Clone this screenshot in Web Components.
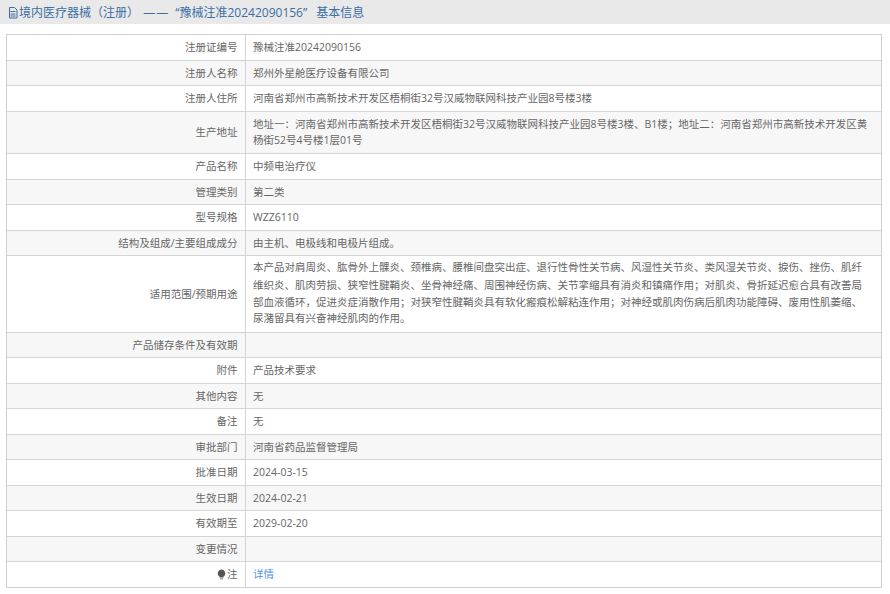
<!DOCTYPE html>
<html lang="zh"><head><meta charset="utf-8">
<style>html,body{margin:0;padding:0;background:#fff;overflow:hidden}body{font-family:"Open Sans","Noto Sans CJK SC",sans-serif;font-size:10.5px;color:#666}div{white-space:nowrap}</style>
</head><body>
<detail-page>
<reg-row label="注册证编号">豫械注准20242090156</reg-row>
<reg-row label="注册人名称" alt>郑州外星舱医疗设备有限公司</reg-row>
<reg-row label="注册人住所">河南省郑州市高新技术开发区梧桐街32号汉威物联网科技产业园8号楼3楼</reg-row>
<reg-row label="生产地址" alt><div>地址一：河南省郑州市高新技术开发区梧桐街32号汉威物联网科技产业园8号楼3楼、B1楼；地址二：河南省郑州市高新技术开发区黄</div><div>杨街52号4号楼1层01号</div></reg-row>
<reg-row label="产品名称">中频电治疗仪</reg-row>
<reg-row label="管理类别" alt>第二类</reg-row>
<reg-row label="型号规格">WZZ6110</reg-row>
<reg-row label="结构及组成/主要组成成分" alt>由主机、电极线和电极片组成。</reg-row>
<reg-row label="适用范围/预期用途"><div>本产品对肩周炎、肱骨外上髁炎、颈椎病、腰椎间盘突出症、退行性骨性关节病、风湿性关节炎、类风湿关节炎、捩伤、挫伤、肌纤</div><div>维织炎、肌肉劳损、狭窄性腱鞘炎、坐骨神经痛、周围神经伤病、关节挛缩具有消炎和镇痛作用；对肌炎、骨折延迟愈合具有改善局</div><div>部血液循环，促进炎症消散作用；对狭窄性腱鞘炎具有软化瘢痕松解粘连作用；对神经或肌肉伤病后肌肉功能障碍、废用性肌萎缩、</div><div>尿潴留具有兴奋神经肌肉的作用。</div></reg-row>
<reg-row label="产品储存条件及有效期" alt></reg-row>
<reg-row label="附件">产品技术要求</reg-row>
<reg-row label="其他内容" alt>无</reg-row>
<reg-row label="备注">无</reg-row>
<reg-row label="审批部门" alt>河南省药品监督管理局</reg-row>
<reg-row label="批准日期">2024-03-15</reg-row>
<reg-row label="生效日期" alt>2024-02-21</reg-row>
<reg-row label="有效期至">2029-02-20</reg-row>
<reg-row label="变更情况" alt></reg-row>
<reg-row label="注" note last><a>详情</a></reg-row>
</detail-page>
<script>
function punct(root){const w=document.createTreeWalker(root,NodeFilter.SHOW_TEXT);const ns=[];while(w.nextNode())ns.push(w.currentNode);
 for(const n of ns){if(!/[：，；（）]/.test(n.data))continue;const f=document.createDocumentFragment();
  n.data.split(/([：，；（）])/).forEach(s=>{if(!s)return;if(/^[：，；（）]$/.test(s)){const b=document.createElement('span');b.style.fontFamily='"Noto Sans CJK TC",sans-serif';b.textContent=s;f.append(b)}else f.append(s)});n.replaceWith(f)}}
class DetailPage extends HTMLElement{constructor(){super();this.attachShadow({mode:'open'}).innerHTML=`<style>
:host{display:block}
header{height:24.3px;background:#e9e9e9;display:flex;align-items:center;padding-left:7px;font-size:12px;color:#3a6ea5;line-height:24px;white-space:pre}
header svg{width:12px;height:13px;flex:none}
.d{letter-spacing:1px;margin-right:3px}
.e{margin-right:6px}
.t{font-family:"Noto Sans CJK TC",sans-serif}
main{margin:10px 8px 0 6px;border:1.5px solid #d0d0d0;display:block}
</style><header><svg viewBox="0 0 12 13" fill="none" stroke="#3a6ea5"><path d="M2.500 1.500h5l2.500 2.500v8h-7.500z"/><path d="M3.500 5.500h5M3.500 8h5M3.500 10h5"/></svg><span>境内医疗器械<span class="t">（</span>注册<span class="t">）</span><span class="d"> ——</span> “豫械注准20242090156”<span class="e"> </span>基本信息</span></header><main><slot></slot></main>`}}
class RegRow extends HTMLElement{constructor(){super();const note=this.hasAttribute('note');this.attachShadow({mode:'open'}).innerHTML=`<style>
:host{display:grid;grid-template-columns:238.500px 1fr;line-height:15px;border-bottom:1px solid #d4d4d4;background:#fff;box-sizing:border-box}
:host([alt]){background:#f7f7f7}
:host([last]){border-bottom:0}
.l{display:flex;align-items:center;justify-content:flex-end;padding:3.750px 7px 3.750px 0;border-right:1.500px solid #d4d4d4;min-height:17px;gap:1px}
.v{padding:3.750px 8px 3.750px 7.500px;display:flex;align-items:center;min-height:17px}
::slotted(div){height:17px;line-height:15px}
::slotted(a){color:#4d94e8}
svg{width:9px;height:11px}
</style><div class="l">${note?'<svg viewBox="0 0 9 11"><path fill="#555" d="M4.500 0.500a3.800 3.800 0 0 1 2 7v1h-4v-1a3.800 3.800 0 0 1 2-7z"/><path fill="#aaa" d="M3 9h3v1.500H3z"/></svg>':''}${this.getAttribute('label')}</div><div class="v"><span><slot></slot></span></div>`}}
customElements.define('detail-page',DetailPage);customElements.define('reg-row',RegRow);
document.querySelectorAll('reg-row').forEach(punct);
</script>
</body></html>
